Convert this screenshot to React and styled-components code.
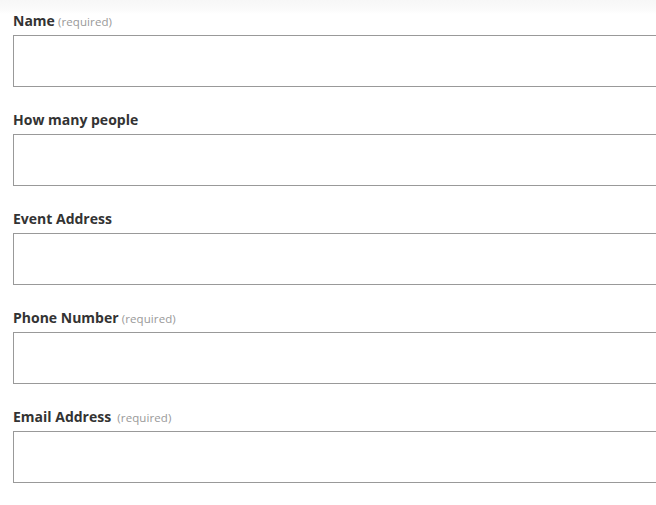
import React from 'react'
import styled, { createGlobalStyle } from 'styled-components'

const GlobalStyle = createGlobalStyle`
  html, body {
    margin: 0;
    padding: 0;
    overflow: hidden;
    background: linear-gradient(to bottom, #f7f7f7 0px, #fbfbfb 10px, #ffffff 14px) no-repeat;
    background-color: #fff;
  }
`

const Form = styled.form`
  font-family: "Open Sans", "Liberation Sans", sans-serif;
  padding: 11px 0 0 13px;
  overflow: hidden;
`

const Field = styled.div`
  margin-bottom: 23px;
`

const Label = styled.label`
  display: block;
  height: 20px;
  line-height: 20px;
  margin-bottom: 4px;
  font-size: 14px;
  font-weight: 700;
  color: #333;
  white-space: pre;
`

const Required = styled.span`
  font-size: 11.5px;
  font-weight: 400;
  color: #999;
  letter-spacing: 0.1px;
`

const TextInput = styled.input`
  display: block;
  box-sizing: border-box;
  width: 700px;
  height: 52px;
  margin: 0;
  padding: 0 8px;
  border: 1px solid #999;
  border-radius: 0;
  background: #fff;
  font-family: inherit;
  font-size: 14px;
  outline: none;
`

const fields = [
  { label: 'Name', required: true, gap: ' ' },
  { label: 'How many people' },
  { label: 'Event Address' },
  { label: 'Phone Number', required: true, gap: ' ' },
  { label: 'Email Address', required: true, gap: '  ' }
]

export default function App () {
  return (
    <>
      <GlobalStyle />
      <Form>
        {fields.map(f => (
          <Field key={f.label}>
            <Label>
              {f.label}
              {f.required && <Required>{f.gap}(required)</Required>}
            </Label>
            <TextInput type='text' />
          </Field>
        ))}
      </Form>
    </>
  )
}
